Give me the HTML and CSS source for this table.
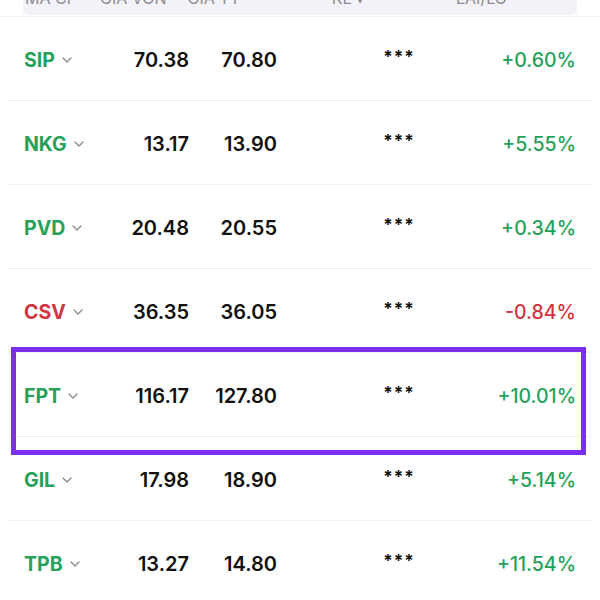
FILE: index.html
```html
<!DOCTYPE html>
<html lang="vi">
<head>
<meta charset="utf-8">
<link rel="stylesheet" href="styles.css">
</head>
<body>
<div class="head-wrap">
  <div class="head">
    <span class="h1">MÃ CP</span>
    <span class="h2">GIÁ VỐN</span>
    <span class="h3">GIÁ TT</span>
    <span class="h4">KL ▾</span>
    <span class="h5">LÃI/LỖ</span>
  </div>
</div>
<div class="list">
  <div class="row">
    <span class="tk up">SIP<svg class="chev" viewBox="0 0 10 6"><polyline points="1,1 5,5 9,1"/></svg></span>
    <span class="num">70.38</span><span class="num">70.80</span><span class="kl">***</span><span class="pct up">+0.60%</span>
  </div>
  <div class="row">
    <span class="tk up">NKG<svg class="chev" viewBox="0 0 10 6"><polyline points="1,1 5,5 9,1"/></svg></span>
    <span class="num">13.17</span><span class="num">13.90</span><span class="kl">***</span><span class="pct up">+5.55%</span>
  </div>
  <div class="row">
    <span class="tk up">PVD<svg class="chev" viewBox="0 0 10 6"><polyline points="1,1 5,5 9,1"/></svg></span>
    <span class="num">20.48</span><span class="num">20.55</span><span class="kl">***</span><span class="pct up">+0.34%</span>
  </div>
  <div class="row">
    <span class="tk down">CSV<svg class="chev" viewBox="0 0 10 6"><polyline points="1,1 5,5 9,1"/></svg></span>
    <span class="num">36.35</span><span class="num">36.05</span><span class="kl">***</span><span class="pct down">-0.84%</span>
  </div>
  <div class="row">
    <span class="tk up">FPT<svg class="chev" viewBox="0 0 10 6"><polyline points="1,1 5,5 9,1"/></svg></span>
    <span class="num">116.17</span><span class="num">127.80</span><span class="kl">***</span><span class="pct up">+10.01%</span>
  </div>
  <div class="row">
    <span class="tk up">GIL<svg class="chev" viewBox="0 0 10 6"><polyline points="1,1 5,5 9,1"/></svg></span>
    <span class="num">17.98</span><span class="num">18.90</span><span class="kl">***</span><span class="pct up">+5.14%</span>
  </div>
  <div class="row">
    <span class="tk up">TPB<svg class="chev" viewBox="0 0 10 6"><polyline points="1,1 5,5 9,1"/></svg></span>
    <span class="num">13.27</span><span class="num">14.80</span><span class="kl">***</span><span class="pct up">+11.54%</span>
  </div>
  <div class="highlight"></div>
</div>
</body>
</html>
```
FILE: styles.css
```css
html, body {
  margin: 0;
  padding: 0;
  background: #fff;
  overflow: hidden;
  font-family: Inter, "Noto Sans", sans-serif;
  color: #111;
}
.head-wrap {
  display: flow-root;
  border-bottom: 1px solid #f1f1f3;
  height: 16px;
}
.head {
  margin: -12px 23px 0;
  height: 27px;
  background: #f3f2f8;
  border-radius: 0 0 6px 6px;
  display: grid;
  grid-template-columns: 75px 64px 76px 216px 44px;
  padding-left: 2px;
  font-size: 16px;
  line-height: 20px;
  color: #8b8b90;
  font-weight: 400;
  white-space: nowrap;
}
.h2, .h3, .h5 { text-align: right; }
.h4 { text-align: center; }
.list {
  position: relative;
}
.row {
  margin: 0 8px;
  height: 84px;
  box-sizing: border-box;
  border-bottom: 1px solid #f1f1f2;
  padding: 3px 16px 0;
  display: grid;
  grid-template-columns: 86px 79px 88px 244px 55px;
  align-items: center;
  font-size: 20px;
  font-weight: 600;
  white-space: nowrap;
}
.tk {
  display: flex;
  align-items: center;
  gap: 7px;
  font-weight: 700;
  font-size: 19.5px;
}
.chev {
  width: 10px;
  height: 6px;
  fill: none;
  stroke: #8a8a8e;
  stroke-width: 1.3;
  stroke-linecap: round;
  stroke-linejoin: round;
}
.num { text-align: right; }
.kl {
  text-align: center;
  font-size: 17px;
  font-weight: 700;
  letter-spacing: 1px;
  position: relative;
  top: -3px;
}
.pct {
  justify-self: end;
  font-weight: 500;
  font-size: 19.5px;
}
.up { color: #25a159; }
.down { color: #d0343f; }
.highlight {
  position: absolute;
  left: 11px;
  top: 330px;
  width: 575px;
  height: 108px;
  box-sizing: border-box;
  border: 5px solid #7a2ef0;
}
```
